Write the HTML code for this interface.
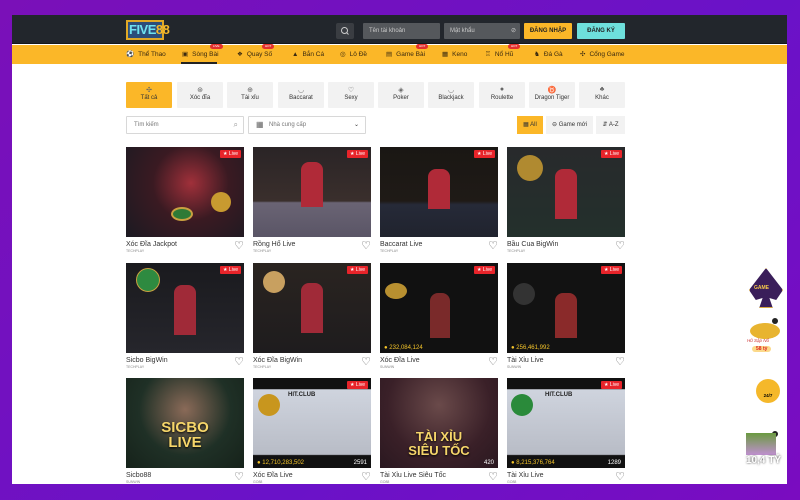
<!DOCTYPE html>
<html><head><meta charset="utf-8"><style>
*{box-sizing:border-box;margin:0;padding:0}
body{width:800px;height:500px;overflow:hidden;background:linear-gradient(135deg,#7a10b8,#6a12c8 60%,#7a0cc0);font-family:"Liberation Sans",sans-serif;position:relative}
.win{position:absolute;left:12px;top:15px;width:775px;height:469px;background:#fff;overflow:hidden}
.hdr{position:absolute;left:0;top:0;width:775px;height:29px;background:#22262c;border-bottom:1px solid #15171a}
.logo{position:absolute;left:114px;top:5px;width:38px;height:20px;border:2px solid #e0a826;background:#2c4d7a;color:#6fe2f0;font-weight:bold;font-size:13px;line-height:16px;padding-left:1px;letter-spacing:-0.5px}
.logo b{color:#f5b82a}
.sbtn{position:absolute;left:324px;top:8px;width:18px;height:16px;background:#3a3d42;border-radius:2px}
.inp{position:absolute;top:8px;height:16px;background:#55585c;color:#c9c9c9;font-size:6px;line-height:16px;padding-left:6px;border-radius:1px}
.btn{position:absolute;top:8px;height:16px;font-size:6px;font-weight:bold;line-height:16px;text-align:center;border-radius:1px;color:#222}
.nav{position:absolute;left:0;top:30px;width:775px;height:19px;background:#fbb728}
.nav span{position:absolute;top:0;font-size:6.5px;line-height:19px;color:#3a2a10}
.nav i{font-style:normal;margin-right:4px}
.hot{position:absolute;top:-1px;background:#e3302e;color:#fff;font-size:3px;padding:0 3px;border-radius:3px;line-height:5px}
.ul{position:absolute;left:169px;top:47px;width:36px;height:2px;background:#222}
.cat{position:absolute;top:67px;width:46px;height:26px;background:#f2f2f2;font-size:6px;color:#333;text-align:center;border-radius:1px}
.cat .ic{display:block;margin-top:4px;height:9px;font-size:7px;color:#666}
.cat.on{background:#fbb728}
.fbox{position:absolute;top:101px;height:18px;border:1px solid #d8d8d8;font-size:6px;color:#777;line-height:16px;padding-left:7px;border-radius:1px}
.tg{position:absolute;top:101px;height:18px;background:#f2f2f2;font-size:6px;color:#333;line-height:18px;text-align:center}
.card{position:absolute;width:118px}
.img{width:118px;height:90px;position:relative;overflow:hidden}
.live{position:absolute;right:3px;top:3px;background:#e8242a;color:#fff;font-size:5px;padding:0 3px;line-height:8px;border-radius:1px}
.t{font-size:7px;color:#333;margin-top:3px;line-height:9px}
.p{font-size:3.5px;color:#888;line-height:5px}
.hrt{position:absolute;right:0;top:92px;font-size:11px;color:#555}
.amt{position:absolute;left:4px;bottom:2px;color:#f5c52a;font-size:6px}
.cnt{position:absolute;right:4px;bottom:2px;color:#fff;font-size:6px}
.big{position:absolute;left:0;right:0;text-align:center;color:#f6d66a;font-weight:bold;font-size:15px;line-height:15px;text-shadow:0 1px 2px #000}
.fl{position:absolute}
</style></head><body>
<div class="win">
<div class="hdr">
<div class="logo">FIVE<b>88</b></div>
<div class="sbtn"><svg width="18" height="16"><circle cx="8.5" cy="7.5" r="3" stroke="#ccc" fill="none" stroke-width="1"/><line x1="10.7" y1="9.7" x2="12.5" y2="11.5" stroke="#ccc"/></svg></div>
<div class="inp" style="left:351px;width:77px">Tên tài khoản</div>
<div class="inp" style="left:432px;width:76px">Mật khẩu<span style="position:absolute;right:4px;color:#ccc">⊘</span></div>
<div class="btn" style="left:512px;width:48px;background:#fbb728">ĐĂNG NHẬP</div>
<div class="btn" style="left:565px;width:48px;background:#6ee0dc">ĐĂNG KÝ</div>
</div>
<div class="nav">
<span style="left:114px"><i>⚽</i>Thể Thao</span>
<span style="left:170px"><i>▣</i>Sòng Bài</span><div class="hot" style="left:198px">LIVE</div>
<span style="left:225px"><i>❖</i>Quay Số</span><div class="hot" style="left:250px">HOT</div>
<span style="left:280px"><i>▲</i>Bắn Cá</span>
<span style="left:328px"><i>◎</i>Lô Đề</span>
<span style="left:374px"><i>▤</i>Game Bài</span><div class="hot" style="left:404px">HOT</div>
<span style="left:430px"><i>▦</i>Keno</span>
<span style="left:473px"><i>♖</i>Nổ Hũ</span><div class="hot" style="left:496px">HOT</div>
<span style="left:522px"><i>♞</i>Đá Gà</span>
<span style="left:568px"><i>✣</i>Cổng Game</span>
</div>
<div class="ul"></div>

<div class="cat on" style="left:114px"><span class="ic">✣</span>Tất cả</div>
<div class="cat" style="left:165px"><span class="ic">⊛</span>Xóc đĩa</div>
<div class="cat" style="left:215px"><span class="ic">⊕</span>Tài xỉu</div>
<div class="cat" style="left:266px"><span class="ic">◡</span>Baccarat</div>
<div class="cat" style="left:316px"><span class="ic">♡</span>Sexy</div>
<div class="cat" style="left:366px"><span class="ic">◈</span>Poker</div>
<div class="cat" style="left:416px"><span class="ic">◡</span>Blackjack</div>
<div class="cat" style="left:467px"><span class="ic">●</span>Roulette</div>
<div class="cat" style="left:517px"><span class="ic">♉</span>Dragon Tiger</div>
<div class="cat" style="left:567px"><span class="ic">♣</span>Khác</div>

<div class="fbox" style="left:114px;width:118px">Tìm kiếm<span style="position:absolute;right:5px;font-size:8px;color:#999">⌕</span></div>
<div class="fbox" style="left:236px;width:118px;padding-left:20px"><span style="position:absolute;left:7px;font-size:8px;color:#666">▦</span>Nhà cung cấp<span style="position:absolute;right:6px;color:#333">⌄</span></div>
<div class="tg" style="left:505px;width:26px;background:#fbb728">▦ All</div>
<div class="tg" style="left:534px;width:47px">⊖ Game mới</div>
<div class="tg" style="left:584px;width:29px">⇵ A-Z</div>

<!-- row 1 -->
<div class="card" style="left:114px;top:132px"><div class="img" style="background:radial-gradient(circle at 55% 40%,#a0303a,#3a1a22 45%,#1b1a22)"><div class="fl" style="left:45px;top:60px;width:22px;height:14px;border-radius:50%;background:#2e7a36;border:2px solid #c9a040"></div><div class="fl" style="left:85px;top:45px;width:20px;height:20px;border-radius:50%;background:#c89a30"></div><div class="live">★ Live</div></div><div class="t">Xóc Đĩa Jackpot</div><div class="p">TECHPLAY</div><div class="hrt">♡</div></div>
<div class="card" style="left:241px;top:132px"><div class="img" style="background:linear-gradient(#2a2426 0,#3a2f2c 60%,#6a6474 62%,#5a5566)"><div class="fl" style="left:48px;top:15px;width:22px;height:45px;background:#b02a38;border-radius:8px 8px 0 0"></div><div class="live">★ Live</div></div><div class="t">Rồng Hổ Live</div><div class="p">TECHPLAY</div><div class="hrt">♡</div></div>
<div class="card" style="left:368px;top:132px"><div class="img" style="background:linear-gradient(#1a1714 0,#1f1a16 60%,#262a38 64%,#20232e)"><div class="fl" style="left:48px;top:22px;width:22px;height:40px;background:#b02a38;border-radius:8px 8px 0 0"></div><div class="live">★ Live</div></div><div class="t">Baccarat Live</div><div class="p">TECHPLAY</div><div class="hrt">♡</div></div>
<div class="card" style="left:495px;top:132px"><div class="img" style="background:linear-gradient(#282a2c,#23302c)"><div class="fl" style="left:10px;top:8px;width:26px;height:26px;border-radius:50%;background:#b08a30"></div><div class="fl" style="left:48px;top:22px;width:22px;height:50px;background:#b02a38;border-radius:8px 8px 0 0"></div><div class="live">★ Live</div></div><div class="t">Bầu Cua BigWin</div><div class="p">TECHPLAY</div><div class="hrt">♡</div></div>
<!-- row 2 -->
<div class="card" style="left:114px;top:248px"><div class="img" style="background:linear-gradient(#1a1a1e,#26262c)"><div class="fl" style="left:10px;top:5px;width:24px;height:24px;border-radius:50%;background:#2e8a40;border:1px solid #c9a040"></div><div class="fl" style="left:48px;top:22px;width:22px;height:50px;background:#a02a38;border-radius:8px 8px 0 0"></div><div class="live">★ Live</div></div><div class="t">Sicbo BigWin</div><div class="p">TECHPLAY</div><div class="hrt">♡</div></div>
<div class="card" style="left:241px;top:248px"><div class="img" style="background:linear-gradient(#2a2420,#1e1c1e)"><div class="fl" style="left:10px;top:8px;width:22px;height:22px;border-radius:50%;background:#c8a060"></div><div class="fl" style="left:48px;top:20px;width:22px;height:50px;background:#a02a38;border-radius:8px 8px 0 0"></div><div class="live">★ Live</div></div><div class="t">Xóc Đĩa BigWin</div><div class="p">TECHPLAY</div><div class="hrt">♡</div></div>
<div class="card" style="left:368px;top:248px"><div class="img" style="background:#111"><div class="fl" style="left:5px;top:20px;width:22px;height:16px;border-radius:50%;background:#b89030"></div><div class="fl" style="left:50px;top:30px;width:20px;height:45px;background:#7a2a2a;border-radius:8px 8px 0 0"></div><div class="live">★ Live</div><div class="amt">● 232,084,124</div></div><div class="t">Xóc Đĩa Live</div><div class="p">SUNWIN</div><div class="hrt">♡</div></div>
<div class="card" style="left:495px;top:248px"><div class="img" style="background:#121212"><div class="fl" style="left:6px;top:20px;width:22px;height:22px;border-radius:50%;background:#333"></div><div class="fl" style="left:48px;top:30px;width:22px;height:45px;background:#8a2a2a;border-radius:8px 8px 0 0"></div><div class="live">★ Live</div><div class="amt">● 256,461,992</div></div><div class="t">Tài Xỉu Live</div><div class="p">SUNWIN</div><div class="hrt">♡</div></div>
<!-- row 3 -->
<div class="card" style="left:114px;top:363px"><div class="img" style="background:radial-gradient(circle at 50% 35%,#8a6a58,#1f3026 55%,#16221a)"><div class="big" style="top:42px">SICBO<br>LIVE</div></div><div class="t">Sicbo88</div><div class="p">SUNWIN</div><div class="hrt">♡</div></div>
<div class="card" style="left:241px;top:363px"><div class="img" style="background:linear-gradient(#111 0,#111 12%,#cfd4de 13%,#b8bcc6 85%,#111 86%)"><div class="fl" style="left:5px;top:16px;width:22px;height:22px;border-radius:50%;background:#c8961e"></div><div class="fl" style="left:35px;top:14px;color:#222;font-size:6px;font-weight:bold">HIT.CLUB</div><div class="live">★ Live</div><div class="amt">● 12,710,283,502</div><div class="cnt">2591</div></div><div class="t">Xóc Đĩa Live</div><div class="p">GO88</div><div class="hrt">♡</div></div>
<div class="card" style="left:368px;top:363px"><div class="img" style="background:radial-gradient(circle at 50% 30%,#6a4a4a,#3a2028 60%,#2a1820)"><div class="big" style="top:52px;font-size:13px;line-height:14px">TÀI XỈU<br>SIÊU TỐC</div><div class="cnt">420</div></div><div class="t">Tài Xỉu Live Siêu Tốc</div><div class="p">GO88</div><div class="hrt">♡</div></div>
<div class="card" style="left:495px;top:363px"><div class="img" style="background:linear-gradient(#111 0,#111 12%,#cfd4de 13%,#b8bcc6 85%,#111 86%)"><div class="fl" style="left:4px;top:16px;width:22px;height:22px;border-radius:50%;background:#2a8a3a"></div><div class="fl" style="left:38px;top:14px;color:#222;font-size:6px;font-weight:bold">HIT.CLUB</div><div class="live">★ Live</div><div class="amt">● 8,215,376,764</div><div class="cnt">1289</div></div><div class="t">Tài Xỉu Live</div><div class="p">GO88</div><div class="hrt">♡</div></div>

<!-- floating -->
<div class="fl" style="left:737px;top:253px;width:34px;height:40px;background:#3a1e5a;clip-path:polygon(50% 0,100% 55%,80% 80%,60% 75%,70% 100%,30% 100%,40% 75%,20% 80%,0 55%);border:1px solid #d8a840"></div>
<div class="fl" style="left:742px;top:270px;font-size:5px;color:#f5c84a;font-weight:bold">GAME</div>
<div class="fl" style="left:738px;top:308px;width:30px;height:16px;border-radius:50%;background:#e8b430"></div>
<div class="fl" style="left:735px;top:323px;font-size:4.5px;color:#c33;font-style:italic">Hũ Sập Nổ</div>
<div class="fl" style="left:740px;top:331px;padding:0 4px;background:#fbd98a;border-radius:4px;font-size:5px;color:#d22;font-weight:bold">58 tỷ</div>
<div class="fl" style="left:760px;top:303px;width:6px;height:6px;border-radius:50%;background:#222"></div>
<div class="fl" style="left:744px;top:364px;width:24px;height:24px;border-radius:50%;background:#f5b82a;font-size:4.5px;text-align:center;padding-top:14px;font-weight:bold">24/7</div>
<div class="fl" style="left:760px;top:416px;width:6px;height:6px;border-radius:50%;background:#222"></div>
<div class="fl" style="left:734px;top:418px;width:30px;height:22px;background:linear-gradient(#6a9a40,#c090d0)"></div>
<div class="fl" style="left:734px;top:440px;font-size:10px;font-weight:bold;color:#fff;text-shadow:0 0 2px #333">10,4 TỶ</div>
</div>
</body></html>
